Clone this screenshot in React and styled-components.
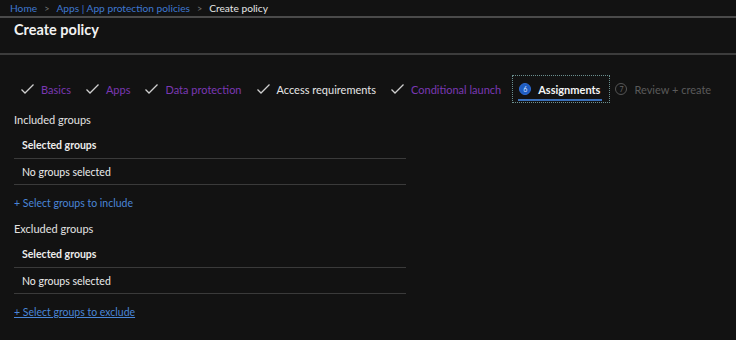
import React from "react";
import styled, { createGlobalStyle } from "styled-components";

const Global = createGlobalStyle`
  html, body { margin: 0; padding: 0; background: #121212; }
  body { font-family: "Lato", "Open Sans", sans-serif; color: #e8e8e8; }
  * { box-sizing: border-box; }
`;

const Page = styled.div`
  width: 736px;
  height: 340px;
  background: #121212;
  overflow: hidden;
`;

const Breadcrumb = styled.nav`
  height: 18px;
  display: flex;
  align-items: center;
  gap: 7px;
  padding-left: 10px;
  font-size: 10.2px;
  border-bottom: 2px solid #4a4a4a;
  white-space: nowrap;
`;

const Crumb = styled.span`
  color: ${(p) => (p.$current ? "#e6e6e6" : "#3f78d0")};
`;

const Sep = styled.span`
  color: #777;
  font-size: 9px;
`;

const TitleBar = styled.header`
  height: 37px;
  padding: 3px 0 0 14px;
  border-bottom: 2px solid #3c3c3c;
`;

const Title = styled.h1`
  margin: 0;
  font-size: 14.5px;
  font-weight: 700;
  color: #f2f2f2;
`;

const Tabs = styled.div`
  display: flex;
  align-items: center;
  height: 28px;
  margin-top: 20px;
  padding-left: 20px;
  white-space: nowrap;
`;

const Tab = styled.div`
  position: relative;
  flex-shrink: 0;
  display: flex;
  align-items: center;
  gap: ${(p) => (p.$num ? "7px" : "6px")};
  height: 28px;
  padding: ${(p) => (p.$active ? "0 10px 0 7px" : "0")};
  margin-right: ${(p) => (p.$active ? "5px" : "14px")};
  margin-left: ${(p) => (p.$active ? "-3px" : "0")};
  font-size: 11px;
  font-weight: ${(p) => (p.$active ? 700 : 400)};
  color: ${(p) => p.$color};
  outline: ${(p) => (p.$active ? "1px dotted #6a8f8f" : "none")};
  outline-offset: -1px;
`;

const Underline = styled.span`
  position: absolute;
  left: 6px;
  right: 8px;
  bottom: 2px;
  height: 2px;
  background: #3b6fb8;
`;

const Num = styled.span`
  width: 12px;
  height: 12px;
  border-radius: 50%;
  display: inline-flex;
  align-items: center;
  justify-content: center;
  font-size: 7px;
  font-weight: 400;
  background: ${(p) => (p.$filled ? "#1e5cc0" : "transparent")};
  border: 1px solid ${(p) => (p.$filled ? "#2d6ad0" : "#555")};
  color: ${(p) => (p.$filled ? "#d8e4ff" : "#666")};
`;

const Check = () => (
  <svg width="15" height="12" viewBox="0 0 15 12">
    <polyline points="1.5,6.5 5,10 13.5,1.5" fill="none" stroke="#cfcfcf" strokeWidth="1.3" />
  </svg>
);

const Content = styled.main`
  padding: 9px 0 0 14px;
  width: 406px;
`;

const Section = styled.section`
  margin-bottom: 11px;
`;

const SectionLabel = styled.div`
  font-size: 11px;
  color: #e2e2e2;
  height: 16px;
  line-height: 16px;
`;

const Row = styled.div`
  height: ${(p) => p.$h}px;
  display: flex;
  align-items: center;
  padding-left: 8px;
  padding-top: ${(p) => (p.$head ? "3px" : "0")};
  font-size: 10.5px;
  font-weight: ${(p) => (p.$head ? 700 : 400)};
  color: #ececec;
  border-bottom: 1px solid #3a3a3a;
`;

const Link = styled.a`
  display: block;
  margin-top: 11px;
  font-size: 10.5px;
  color: #4a86d8;
  text-decoration: ${(p) => (p.$underline ? "underline" : "none")};
  line-height: 14px;
`;

const steps = [
  { label: "Basics", color: "#7a38b3" },
  { label: "Apps", color: "#7a38b3" },
  { label: "Data protection", color: "#7a38b3" },
  { label: "Access requirements", color: "#e6e6e6" },
  { label: "Conditional launch", color: "#7a38b3" },
];

function Group({ label, link, underline }) {
  return (
    <Section>
      <SectionLabel>{label}</SectionLabel>
      <Row $head $h={31}>Selected groups</Row>
      <Row $h={26}>No groups selected</Row>
      <Link href="#" $underline={underline}>{link}</Link>
    </Section>
  );
}

export default function App() {
  return (
    <Page>
      <Global />
      <Breadcrumb>
        <Crumb>Home</Crumb>
        <Sep>&gt;</Sep>
        <Crumb>Apps | App protection policies</Crumb>
        <Sep>&gt;</Sep>
        <Crumb $current>Create policy</Crumb>
      </Breadcrumb>
      <TitleBar>
        <Title>Create policy</Title>
      </TitleBar>
      <Tabs>
        {steps.map((s) => (
          <Tab key={s.label} $color={s.color}>
            <Check />
            {s.label}
          </Tab>
        ))}
        <Tab $active $num $color="#f4f4f4">
          <Num $filled>6</Num>
          Assignments
          <Underline />
        </Tab>
        <Tab $num $color="#5a5a5a">
          <Num>7</Num>
          Review + create
        </Tab>
      </Tabs>
      <Content>
        <Group label="Included groups" link="+ Select groups to include" />
        <Group label="Excluded groups" link="+ Select groups to exclude" underline />
      </Content>
    </Page>
  );
}
